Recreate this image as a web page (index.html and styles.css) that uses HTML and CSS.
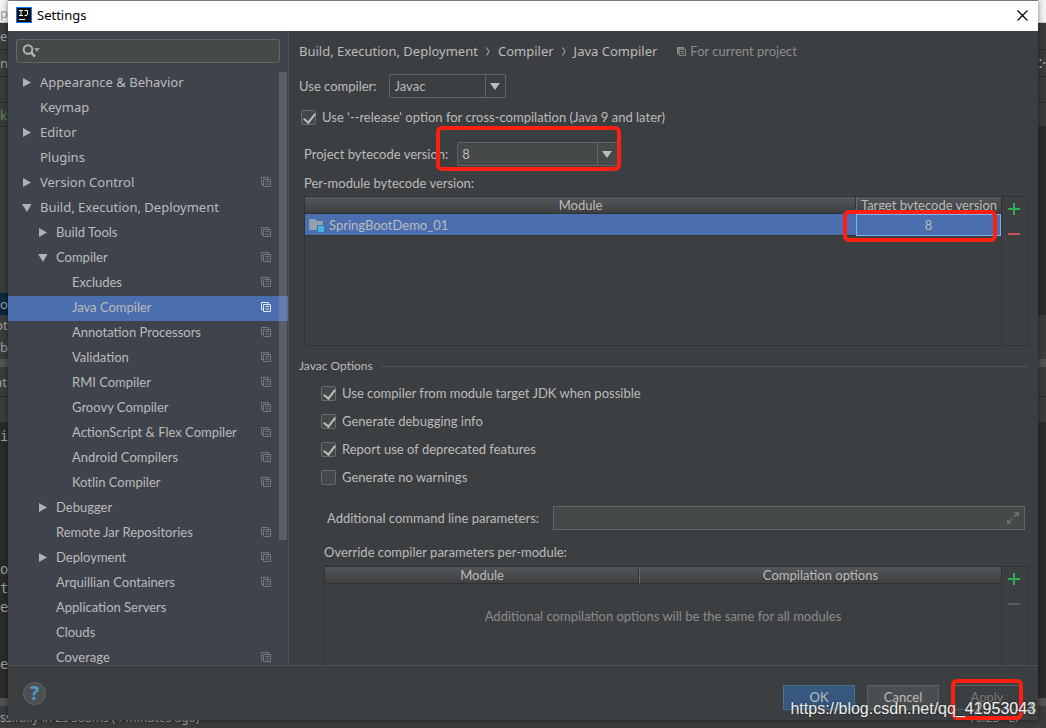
FILE: index.html
```html
<!DOCTYPE html>
<html lang="en">
<head>
<meta charset="utf-8">
<title>Settings</title>
<link rel="stylesheet" href="styles.css">
</head>
<body>
<svg class="defs" aria-hidden="true">
  <symbol id="right" viewBox="0 0 10 9"><path d="M1 0L9 4.500L1 9Z" fill="#afb1b3"/></symbol>
  <symbol id="down" viewBox="0 0 10 9"><path d="M0 1H9.500L5 9Z" fill="#afb1b3"/></symbol>
  <symbol id="copy" viewBox="0 0 10 10"><path d="M2.5 7.5H0.5V0.5H7.5V2M2.5 2.5H9.5V9.5H2.5ZM4.500 4.500H8M4.500 7H8" fill="none" stroke="currentColor"/></symbol>
  <symbol id="plus" viewBox="0 0 12 12"><path d="M6 0V12M0 6H12" stroke="#2fae4f" stroke-width="2"/></symbol>
  <symbol id="minus" viewBox="0 0 12 12"><path d="M0 6H12" stroke="currentColor" stroke-width="2"/></symbol>
</svg>

<div class="desktop" aria-hidden="true">
  <div class="ide-top"><span>pa</span></div>
  <div class="ide-bar h32"><span>e</span></div>
  <div class="ide-bar h32 between"><span>n.</span><b>⁘</b></div>
  <div class="ide-bar h26"></div>
  <div class="ide-bar h24"><i>ks</i></div>
  <div class="ide-bar plain h165"></div>
  <div class="ide-bar plain h22 marked"><span>o</span></div>
  <div class="ide-bar plain h20"><span class="cut">pt</span></div>
  <div class="ide-bar plain h24"><span>b</span></div>
  <div class="ide-split"></div>
  <div class="ide-bar h28"><span class="cut">at</span></div>
  <div class="ide-bar h26"></div>
  <pre class="ide-code">i






o
t
e


e</pre>
  <div class="ide-split"></div>
  <div class="ide-status"><span>ss.fully in 2s 388ms (4 minutes ago)</span><span>16:23 &nbsp; LF÷</span></div>
</div>

<main class="dialog">
  <header class="titlebar">
    <svg width="16" height="16" viewBox="0 0 16 16"><rect width="16" height="16" fill="#087cfa"/><rect x="1" y="1" width="14" height="14" fill="#111"/><path d="M3 3.5H7M5 3.5V8M3 8.5H7M8.500 3.500H11.500V7Q11.500 8.500 10 8.500H8.500M3 12.5H9" fill="none" stroke="#fff"/></svg>
    <h1>Settings</h1>
    <button class="close" aria-label="Close"><svg width="11" height="11" viewBox="0 0 11 11"><path d="M.5 .5L10.5 10.5M10.5 .5L.5 10.5" stroke="#000" stroke-width="1.2"/></svg></button>
  </header>

  <div class="body">
    <nav class="sidebar">
      <label class="search">
        <svg width="20" height="14" viewBox="0 0 20 14"><circle cx="6" cy="5.500" r="4.300" fill="none" stroke="#afb1b3" stroke-width="2"/><path d="M9 8.500L13 12.500" stroke="#afb1b3" stroke-width="2.500"/><path d="M12 4H18L15 8Z" fill="#9a9c9d"/></svg>
        <input type="text" aria-label="Search settings">
      </label>
      <div class="scroller">
      <ul class="tree">
        <li class="l1"><svg class="ar"><use href="#right"/></svg><a href="#">Appearance &amp; Behavior</a></li>
        <li class="l1"><a href="#">Keymap</a></li>
        <li class="l1"><svg class="ar"><use href="#right"/></svg><a href="#">Editor</a></li>
        <li class="l1"><a href="#">Plugins</a></li>
        <li class="l1"><svg class="ar"><use href="#right"/></svg><a href="#">Version Control</a><svg class="cp"><use href="#copy"/></svg></li>
        <li class="l1"><svg class="ar"><use href="#down"/></svg><a href="#">Build, Execution, Deployment</a></li>
        <li class="l2"><svg class="ar"><use href="#right"/></svg><a href="#">Build Tools</a><svg class="cp"><use href="#copy"/></svg></li>
        <li class="l2"><svg class="ar"><use href="#down"/></svg><a href="#">Compiler</a><svg class="cp"><use href="#copy"/></svg></li>
        <li class="l3"><a href="#">Excludes</a><svg class="cp"><use href="#copy"/></svg></li>
        <li class="l3 selected"><a href="#" aria-current="page">Java Compiler</a><svg class="cp"><use href="#copy"/></svg></li>
        <li class="l3"><a href="#">Annotation Processors</a><svg class="cp"><use href="#copy"/></svg></li>
        <li class="l3"><a href="#">Validation</a><svg class="cp"><use href="#copy"/></svg></li>
        <li class="l3"><a href="#">RMI Compiler</a><svg class="cp"><use href="#copy"/></svg></li>
        <li class="l3"><a href="#">Groovy Compiler</a><svg class="cp"><use href="#copy"/></svg></li>
        <li class="l3"><a href="#">ActionScript &amp; Flex Compiler</a><svg class="cp"><use href="#copy"/></svg></li>
        <li class="l3"><a href="#">Android Compilers</a><svg class="cp"><use href="#copy"/></svg></li>
        <li class="l3"><a href="#">Kotlin Compiler</a><svg class="cp"><use href="#copy"/></svg></li>
        <li class="l2"><svg class="ar"><use href="#right"/></svg><a href="#">Debugger</a></li>
        <li class="l2"><a href="#">Remote Jar Repositories</a><svg class="cp"><use href="#copy"/></svg></li>
        <li class="l2"><svg class="ar"><use href="#right"/></svg><a href="#">Deployment</a><svg class="cp"><use href="#copy"/></svg></li>
        <li class="l2"><a href="#">Arquillian Containers</a><svg class="cp"><use href="#copy"/></svg></li>
        <li class="l2"><a href="#">Application Servers</a></li>
        <li class="l2"><a href="#">Clouds</a></li>
        <li class="l2"><a href="#">Coverage</a><svg class="cp"><use href="#copy"/></svg></li>
      </ul>
      <div class="thumb"></div>
      </div>
    </nav>

    <section class="content">
      <div class="crumbs">
        <span>Build, Execution, Deployment</span><svg width="4" height="9" viewBox="0 0 4 9"><path d="M.5 .5L3 4.500L.5 8.500" fill="none" stroke="#bbb"/></svg><span>Compiler</span><svg width="4" height="9" viewBox="0 0 4 9"><path d="M.5 .5L3 4.500L.5 8.500" fill="none" stroke="#bbb"/></svg><span>Java Compiler</span>
        <small><svg width="9" height="9" viewBox="0 0 10 10"><path d="M0 0H8V2H2V8H0Z" fill="#8a8c8d"/><path d="M2.500 2.500H9.500V9.500H2.500ZM4 5H8M4 7H8" fill="none" stroke="#8a8c8d"/></svg>For current project</small>
      </div>
      <div class="row compiler"><label for="comp">Use compiler:</label><span class="combo javac"><select id="comp"><option>Javac</option></select></span></div>
      <label class="row release"><input type="checkbox" checked>Use '--release' option for cross-compilation (Java 9 and later)</label>
      <div class="row project"><label for="ver">Project bytecode version:</label><span class="combo version"><select id="ver"><option>8</option></select><span class="mark mark-version"></span></span></div>
      <p class="caption">Per-module bytecode version:</p>
      <div class="panel modules">
        <div class="pane">
          <table>
            <thead><tr><th>Module</th><th class="target">Target bytecode version</th></tr></thead>
            <tbody><tr class="chosen"><td><span class="mod"><svg width="16" height="14" viewBox="0 0 16 14"><path d="M0 1H6L8 3H14V12H0Z" fill="#8fa0ae"/><rect x="8" y="7" width="8" height="7" fill="#4b6eaf"/><rect x="9" y="8" width="6" height="6" fill="#40b6e0"/></svg>SpringBootDemo_01</span></td><td class="focus">8</td></tr></tbody>
          </table>
          <span class="mark mark-target"></span>
        </div>
        <div class="tools"><button aria-label="Add module"><svg width="12" height="12"><use href="#plus"/></svg></button><button aria-label="Remove module" class="remove"><svg width="12" height="12"><use href="#minus"/></svg></button></div>
      </div>
      <fieldset class="javac-options">
        <legend>Javac Options</legend>
        <label class="row"><input type="checkbox" checked>Use compiler from module target JDK when possible</label>
        <label class="row"><input type="checkbox" checked>Generate debugging info</label>
        <label class="row"><input type="checkbox" checked>Report use of deprecated features</label>
        <label class="row"><input type="checkbox">Generate no warnings</label>
      </fieldset>
      <div class="row params"><label for="par">Additional command line parameters:</label><span class="field"><input id="par" type="text"><svg width="12" height="12" viewBox="0 0 12 12"><path d="M7 0H12V5ZM0 7V12H5Z" fill="#6e7173"/><path d="M10 2L7 5M2 10L5 7" stroke="#6e7173" stroke-width="1.500"/></svg></span></div>
      <p class="caption override">Override compiler parameters per-module:</p>
      <div class="panel overrides">
        <div class="pane">
          <table><thead><tr><th class="module">Module</th><th>Compilation options</th></tr></thead></table>
          <p class="empty">Additional compilation options will be the same for all modules</p>
        </div>
        <div class="tools"><button aria-label="Add override"><svg width="12" height="12"><use href="#plus"/></svg></button><button aria-label="Remove override" class="off" disabled><svg width="12" height="12"><use href="#minus"/></svg></button></div>
      </div>
    </section>
  </div>

  <footer class="footer">
    <button class="help" aria-label="Help">?</button>
    <button class="btn primary">OK</button>
    <button class="btn">Cancel</button>
    <span class="apply"><button class="btn" disabled>Apply</button><span class="mark mark-apply"></span></span>
  </footer>
</main>
<div class="watermark">https://blog.csdn.net/qq_41953043</div>
<div class="watermark ghost">42953044</div>
</body>
</html>
```
FILE: styles.css
```css
* { box-sizing: border-box; }
body {
  margin: 0;
  height: 100vh;
  overflow: hidden;
  position: relative;
  background: #2b2b2b;
  color: #bbbbbb;
  font: 13px/18px Lato, "Noto Sans", sans-serif;
}
button, input, select { font: inherit; color: inherit; margin: 0; padding: 0; }
button { border: 0; background: none; }
p, h1, ul, fieldset, pre { margin: 0; padding: 0; }
.defs { position: absolute; width: 0; height: 0; }

/* IDE window behind the dialog */
.desktop { position: absolute; inset: 0; display: flex; flex-direction: column; color: #a0a0a0; font-family: "Noto Sans", sans-serif; }
.ide-top { height: 23px; background: #f4f4f4; color: #999; line-height: 26px; border-bottom: 1px solid #ccc; }
.ide-bar { background: #3a3c3e; border-bottom: 1px solid #2a2b2c; display: flex; align-items: center; }
.ide-bar i { color: #6a8759; font-style: normal; }
.ide-bar.plain { border: 0; }
.between { justify-content: space-between; }
.cut { margin-left: -5px; }
.ide-bar.marked { background: linear-gradient(90deg, #0d293e 10px, #2b2b2b 10px); }
.h32 { height: 27px; }
.h26 { height: 26px; }
.h24 { height: 24px; }
.h165 { height: 166px; background: linear-gradient(90deg, #3a3c3e 10px, #2b2b2b 10px); }
.h22 { height: 22px; }
.h20 { height: 20px; }
.h28 { height: 30px; }
.ide-split { height: 8px; background: #515355; flex: none; }
.ide-code { flex: 1; min-height: 0; overflow: hidden; padding-top: 4px; font: 14px/19px "DejaVu Sans Mono", monospace; }
.ide-status { height: 22px; padding: 3px 18px 0 0; background: #3a3c3e; display: flex; justify-content: space-between; font-size: 12px; }

/* Dialog frame */
.dialog {
  position: relative;
  margin: 0 8px;
  height: calc(100vh - 8px);
  display: flex;
  flex-direction: column;
  background: #3c3f41;
  box-shadow: 0 0 6px rgba(0, 0, 0, .5);
}
.titlebar { flex: none; height: 31px; padding: 0 10px 2px 8px; display: flex; align-items: center; gap: 5px; background: #fff; color: #000; border-top: 1px solid #777; }
.titlebar h1 { flex: 1; font: 13px/18px "Noto Sans", sans-serif; }
.close { display: flex; }
.body { flex: 1; min-height: 0; display: flex; }

/* Sidebar */
.sidebar { flex: none; width: 281px; display: flex; flex-direction: column; background: #3f434c; border-right: 1px solid #515151; }
.search { flex: none; margin: 8px 8px 0; height: 24px; padding: 0 5px; display: flex; align-items: center; border: 1px solid #646464; border-radius: 3px; background: #45494a; }
.search input { flex: 1; min-width: 0; border: 0; outline: 0; background: none; }
.scroller { flex: 1; min-height: 0; overflow: hidden; position: relative; margin-top: 8px; }
.tree { list-style: none; }
.tree li { height: 25px; padding-right: 17px; padding-bottom: 3px; display: flex; align-items: center; }
.tree a { flex: 1; color: inherit; text-decoration: none; }
.tree .l1 { padding-left: 32px; font-family: "Noto Sans", sans-serif; }
.tree .l2 { padding-left: 48px; }
.tree .l3 { padding-left: 64px; }
.ar { width: 10px; height: 9px; margin: 0 8px 0 -18px; }
.cp { width: 10px; height: 10px; color: #75787d; }
.tree .selected { background: #4b6eaf; }
.selected .cp { color: #dfe5f0; }
.thumb { position: absolute; top: 1px; right: 1px; width: 8px; height: 468px; background: rgba(160, 160, 165, .3); }

/* Content */
.content { flex: 1; min-width: 0; overflow: hidden; padding: 11px 10px 0; display: flex; flex-direction: column; }
.content > * { flex: none; }
.row { display: flex; align-items: center; }
.crumbs { display: flex; align-items: center; gap: 8px; font-family: "Noto Sans", sans-serif; }
.crumbs small { margin-left: 12px; display: flex; align-items: center; gap: 4px; color: #8a8c8d; font: 13px/18px Lato, sans-serif; }
.combo { position: relative; display: block; height: 24px; }
.combo::before { content: ""; position: absolute; right: 20px; top: 1px; bottom: 1px; width: 1px; background: #646464; }
.combo::after { content: ""; position: absolute; right: 6px; top: 9px; border: 5px solid transparent; border-top: 7px solid #bbb; border-bottom: 0; pointer-events: none; }
select { appearance: none; width: 100%; height: 100%; padding-left: 5px; border: 1px solid #646464; border-radius: 2px; background: #3c3f41; }
.compiler { margin-top: 14px; gap: 12px; }
.javac { width: 117px; }
.version { width: 161px; }
.version select { background: #45494a; padding-left: 4px; }
input[type="checkbox"] { appearance: none; width: 15px; height: 15px; margin-right: 6px; border: 1px solid #6b6b6b; border-radius: 2px; background: #43494a; position: relative; }
input[type="checkbox"]:checked::after { content: ""; position: absolute; left: 4px; top: 0; width: 5px; height: 10px; border: solid #bbb; border-width: 0 2px 2px 0; transform: rotate(38deg); }
.release { margin: 10px 0 0 2px; }
.project { margin: 16px 0 0 5px; gap: 9px; }
.caption { margin: 8px 0 0 5px; }
.panel { display: flex; border: 1px solid #323232; }
.pane { flex: 1; min-width: 0; position: relative; }
.tools { width: 26px; padding: 6px 2px 0 0; border-left: 1px solid #323232; display: flex; flex-direction: column; align-items: center; gap: 13px; }
.tools button { display: flex; }
.remove { color: #c75450; }
.off { color: #5b5d5e; }
.modules { margin: 4px 0 0 5px; height: 150px; }
table { width: 100%; table-layout: fixed; border-collapse: separate; border-spacing: 0; }
th { height: 17px; padding: 0; font-weight: 400; line-height: 16px; white-space: nowrap; background: linear-gradient(#55585a, #3d3f41); border-bottom: 1px solid #323232; }
th + th { border-left: 1px solid #6a6c6e; box-shadow: -1px 0 #323232; }
.target { width: 145px; }
td { height: 22px; padding: 0 4px; color: #bbb; background: #4b6eaf; border-bottom: 1px solid #323232; }
.mod { display: flex; align-items: center; gap: 4px; }
td.focus { border: 1px solid #7db3f5; padding: 0; text-align: center; }
.javac-options { margin-top: 11px; padding: 4px 0 0 22px; border: 0; min-width: 0; }
.javac-options legend { width: calc(100% + 22px); margin-left: -22px; padding: 0; display: flex; align-items: center; gap: 8px; font-size: 12px; }
.javac-options legend::after { content: ""; flex: 1; height: 1px; background: #515151; }
.javac-options .row { height: 28px; }
.params { margin: 15px 3px 0 28px; gap: 14px; }
.field { position: relative; flex: 1; height: 24px; }
.field input { width: 100%; height: 100%; border: 1px solid #646464; background: #45494a; }
.field svg { position: absolute; right: 6px; top: 6px; }
.override { margin: 13px 0 0 25px; }
.overrides { margin: 5px 0 0 25px; height: 130px; }
.module { width: 314px; }
.empty { padding-top: 23px; text-align: center; color: #8c8c8c; }

/* Footer */
.footer { flex: none; height: 55px; padding: 0 15px; display: flex; align-items: center; gap: 12px; border-top: 1px solid #515151; }
.help { width: 23px; height: 23px; margin-right: auto; border: 1px solid #646464; border-radius: 50%; background: #4c5052; color: #4a9cc9; font: bold 19px/20px "Noto Sans", sans-serif; }
.btn { width: 72px; height: 25px; margin-top: 8px; border: 1px solid #5e6163; background: #4a4e50; }
.primary { background: #365880; border-color: #4c708c; }
.btn:disabled { color: #777; background: #3c3f41; }
.apply { position: relative; }

/* Annotations */
.mark { position: absolute; border: 4px solid #fc2012; border-radius: 6px; pointer-events: none; }
.mark-version { left: -21px; right: -3px; top: -16px; bottom: -5px; }
.mark-target { right: 4px; top: 13px; width: 154px; height: 32px; }
.mark-apply { left: 0; right: 0; top: 2px; bottom: -10px; }
.watermark { position: absolute; right: 10px; bottom: 9px; color: #eee; font: 16px/20px "Liberation Sans", sans-serif; text-shadow: 0 0 2px #222; }
.ghost { opacity: .5; }
```
